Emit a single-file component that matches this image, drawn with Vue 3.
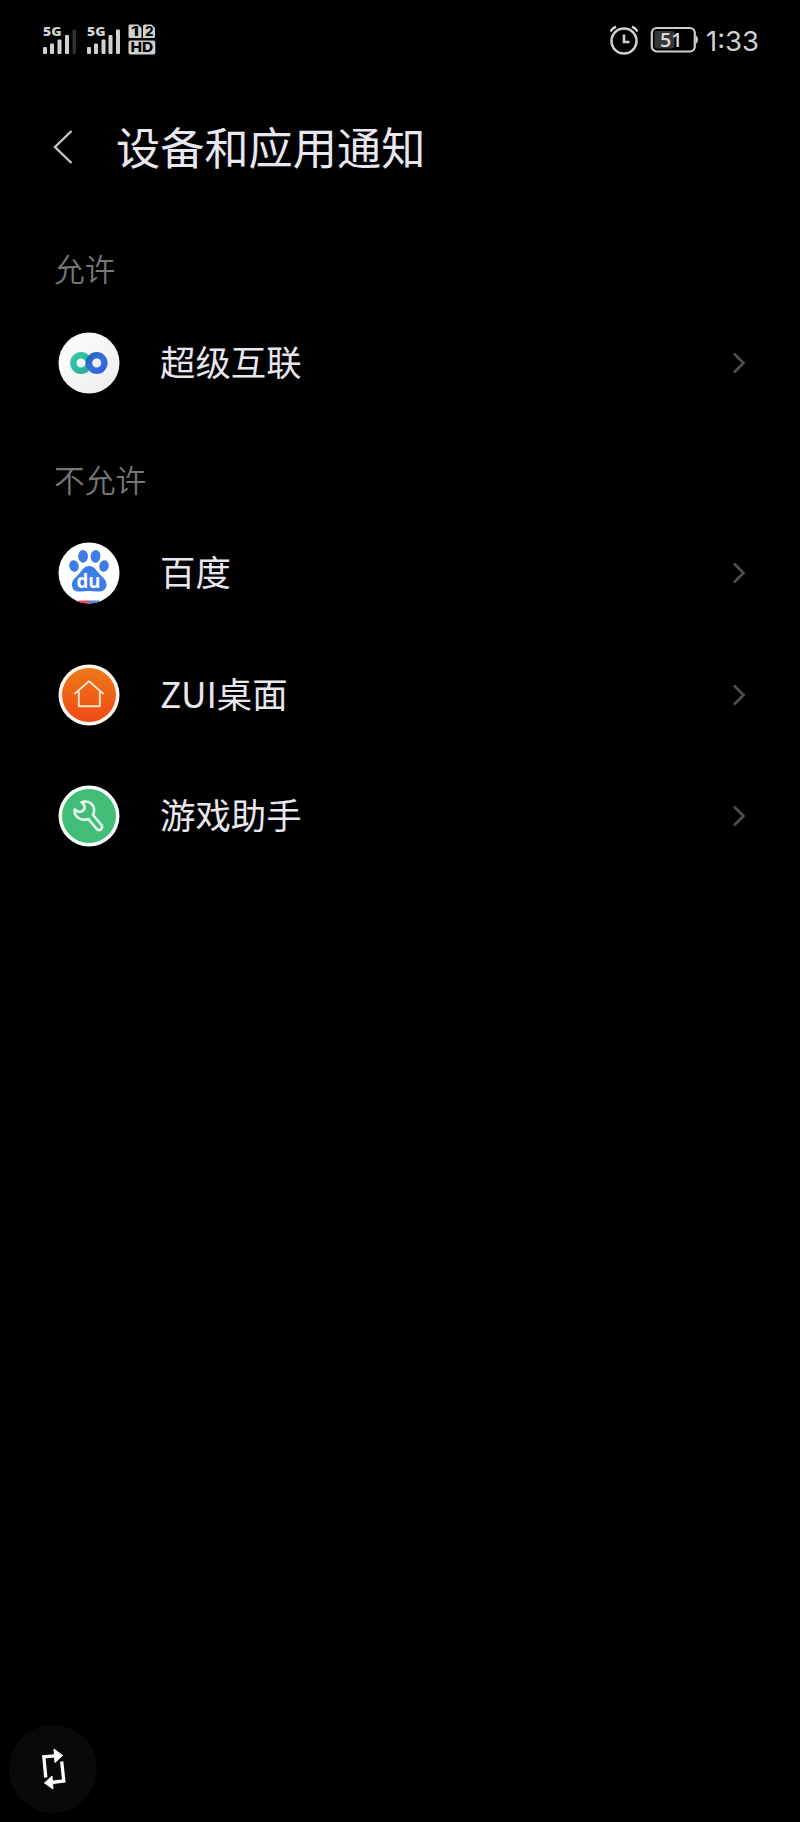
<script setup>
const sections = [
  { title: '允许', items: [{ name: '超级互联', icon: 'link' }] },
  {
    title: '不允许',
    items: [
      { name: '百度', icon: 'baidu' },
      { name: 'ZUI桌面', icon: 'home' },
      { name: '游戏助手', icon: 'tool' },
    ],
  },
]
</script>

<template>
  <div class="screen">
    <header class="status">
      <svg class="signals" width="120" height="40" viewBox="0 0 120 40">
        <g fill="#d0d0d0">
          <text x="3" y="16" class="net" textLength="18.5" lengthAdjust="spacingAndGlyphs">5G</text>
          <rect x="3" y="27" width="4" height="7" rx="1" />
          <rect x="10" y="23.5" width="4" height="10.5" rx="1" />
          <rect x="17.5" y="19.5" width="4" height="14.5" rx="1" />
          <rect x="25" y="15" width="4" height="19" rx="1" />
          <rect x="32.5" y="9.5" width="3.5" height="24.5" rx="1" fill="#303030" />
          <text x="47" y="16" class="net" textLength="18.5" lengthAdjust="spacingAndGlyphs">5G</text>
          <rect x="47" y="27" width="4" height="7" rx="1" />
          <rect x="54" y="23.5" width="4" height="10.5" rx="1" />
          <rect x="61.5" y="19.5" width="4" height="14.5" rx="1" />
          <rect x="68.5" y="15" width="4" height="19" rx="1" />
          <rect x="76" y="9.5" width="4" height="24.5" rx="1" />
          <path d="M90 4.500H98L101.500 8V18H90Q88.500 18 88.500 16.500V6Q88.500 4.500 90 4.500Z" />
          <path d="M104.500 4.500H111.500L115 8V16.500Q115 18 113.500 18H103V6Q103 4.500 104.500 4.500Z" />
          <rect x="88.500" y="20.500" width="26.800" height="14" rx="2" />
        </g>
        <g class="sim">
          <text x="91" y="16" textLength="8" lengthAdjust="spacingAndGlyphs">1</text>
          <text x="105" y="16" textLength="8.500" lengthAdjust="spacingAndGlyphs">2</text>
          <text x="90.500" y="32.200" textLength="22.800" lengthAdjust="spacingAndGlyphs">HD</text>
        </g>
      </svg>
      <div class="right">
        <svg class="alarm" width="32" height="32" viewBox="0 0 32 32" fill="none" stroke="#d0d0d0" stroke-width="2.500">
          <circle cx="16" cy="17" r="12.500" />
          <path d="M16 10.500V18H21.500" stroke-width="2.600" />
          <path d="M2.500 7.500Q4.500 4 8 2.800M24 2.800Q27.500 4 29.500 7.500" stroke-width="2.500" />
        </svg>
        <svg class="battery" width="50" height="28" viewBox="0 0 50 28">
          <rect x="1.800" y="2" width="43" height="23.500" rx="5" fill="none" stroke="#d0d0d0" stroke-width="2.200" />
          <rect x="4.500" y="5" width="20" height="17.500" rx="2.500" fill="#383838" />
          <path d="M46 9.500Q48 10.500 48 13.500T46 18Z" fill="#d0d0d0" />
          <text x="10" y="21" class="level" textLength="22.500" lengthAdjust="spacingAndGlyphs">51</text>
        </svg>
        <span class="time">1:33</span>
      </div>
    </header>

    <div class="title-bar">
      <svg class="back" width="24" height="40" viewBox="0 0 24 40" fill="none" stroke="#c9c9c9" stroke-width="2.300">
        <path d="M20.500 3L4 19L20.500 35" />
      </svg>
      <h1>设备和应用通知</h1>
    </div>

    <section v-for="s in sections" :key="s.title">
      <h2>{{ s.title }}</h2>
      <div v-for="item in s.items" :key="item.name" class="row">
        <svg class="icon" width="62" height="62" viewBox="0 0 62 62">
          <template v-if="item.icon === 'link'">
            <defs>
              <linearGradient id="plate" x1="0" y1="0" x2="1" y2="1">
                <stop offset="0" stop-color="#fff" />
                <stop offset="1" stop-color="#ececee" />
              </linearGradient>
              <linearGradient id="teal" x1="0" y1="0" x2="1" y2="1">
                <stop offset="0" stop-color="#36c9a6" />
                <stop offset="1" stop-color="#26ac9c" />
              </linearGradient>
              <linearGradient id="blue" x1="0" y1="0" x2="1" y2="1">
                <stop offset="0" stop-color="#1f66bc" />
                <stop offset=".5" stop-color="#3870dc" />
                <stop offset="1" stop-color="#315fd8" />
              </linearGradient>
            </defs>
            <circle cx="31" cy="31" r="30.500" fill="url(#plate)" />
            <circle cx="23" cy="31" r="7.700" fill="none" stroke="url(#teal)" stroke-width="6.400" />
            <circle cx="38.700" cy="31" r="7.700" fill="none" stroke="url(#blue)" stroke-width="6.400" />
          </template>
          <template v-else-if="item.icon === 'baidu'">
            <defs>
              <clipPath id="disc"><circle cx="31" cy="31" r="30.500" /></clipPath>
            </defs>
            <circle cx="31" cy="31" r="30.500" fill="#fff" />
            <g clip-path="url(#disc)">
              <rect x="20" y="58.500" width="11" height="4" fill="#ed4959" />
              <rect x="31" y="58.500" width="11" height="4" fill="#4b83ef" />
            </g>
            <g fill="#3e7ce8">
              <ellipse cx="25" cy="14.300" rx="4.900" ry="6.400" />
              <ellipse cx="37.500" cy="14.300" rx="4.900" ry="6.400" transform="rotate(6 37.500 14.300)" />
              <ellipse cx="16" cy="24" rx="4.700" ry="5.900" transform="rotate(-12 16 24)" />
              <ellipse cx="46" cy="24" rx="4.700" ry="5.900" transform="rotate(12 46 24)" />
              <path d="M31 24C36.500 24 37.500 28 42 32.500C46 36.500 49 39 48.500 43.500C48 48.500 43.500 50 39 49.500C33.500 48.700 28.500 48.700 23 49.500C18 50 14.500 48.500 14 43.500C13.500 39 16.500 36.500 20.500 32.500C25 28 25.500 24 31 24Z" />
            </g>
            <text x="18.500" y="46" class="du" textLength="24" lengthAdjust="spacingAndGlyphs">du</text>
          </template>
          <template v-else-if="item.icon === 'home'">
            <defs>
              <linearGradient id="orange" x1="0" y1="0" x2="0" y2="1">
                <stop offset="0" stop-color="#ed7918" />
                <stop offset="1" stop-color="#f04a15" />
              </linearGradient>
            </defs>
            <circle cx="31" cy="31" r="30.500" fill="#fff7f0" />
            <circle cx="31" cy="31" r="27" fill="url(#orange)" />
            <path d="M17 29.500L31 17.300L45 29.500M20.800 27.500V42.200H41.800V27.500" fill="none" stroke="#fce3c8" stroke-width="1.900" stroke-linejoin="round" stroke-linecap="round" />
          </template>
          <template v-else>
            <circle cx="31" cy="31" r="30.500" fill="#f7fffa" />
            <circle cx="31" cy="31" r="27" fill="#42bd77" />
            <path d="M23.500 17.200C28 15.500 33 17 35.200 21C36.600 24 36.200 27.500 35 30L43.500 40Q45 42.300 43 44.200Q40.800 46 38.700 44L30.500 34C27 35.300 22.500 35 19.500 32.300C17 30 16 27 16.800 24.500C19 26.500 22 27.500 24.500 26C27.500 24 27.500 20 23.500 17.200Z" fill="none" stroke="#eafff1" stroke-width="2.600" stroke-linejoin="round" />
          </template>
        </svg>
        <span class="name">{{ item.name }}</span>
        <svg class="chevron" width="14" height="24" viewBox="0 0 14 24" fill="none" stroke="#505050" stroke-width="2.600">
          <path d="M2 2.500L11.500 12L2 21.500" />
        </svg>
      </div>
    </section>

    <div class="rotate">
      <svg width="32" height="44" viewBox="0 0 32 44">
        <g fill="none" stroke="#fff" stroke-width="3.300">
          <path d="M8.800 30.500L6.800 9.800L18 8.800" />
          <path d="M24.700 14.500L26.800 34L14 35.500" />
        </g>
        <path d="M17 2L25.500 8.500L18 15.500Z" fill="#fff" stroke="#fff" stroke-linejoin="round" />
        <path d="M15 29L7.500 36L16 42Z" fill="#fff" stroke="#fff" stroke-linejoin="round" />
      </svg>
    </div>
  </div>
</template>

<style>
body {
  background: #000;
}
</style>

<style scoped>
.screen {
  box-sizing: border-box;
  position: relative;
  width: 800px;
  height: 1822px;
  overflow: hidden;
  background: #000;
  color: #e8e6ee;
  font-family: "Noto Sans CJK SC", sans-serif;
}
.status {
  display: flex;
  justify-content: space-between;
  align-items: center;
  height: 80px;
  padding: 0 40px;
}
.net {
  font: 800 13px "Open Sans", sans-serif;
}
.sim {
  font: 800 13.500px Inter, sans-serif;
  fill: #000;
}
.right {
  display: flex;
  align-items: center;
}
.alarm {
  margin-right: 10px;
}
.battery {
  margin-right: 6px;
}
.level {
  font: 600 20px "Open Sans", sans-serif;
  fill: #d8d8d8;
}
.du {
  font: 700 20px "Open Sans", sans-serif;
  fill: #fff;
}
.time {
  font: 400 27.500px/32px Inter, sans-serif;
  width: 54px;
  padding-top: 2px;
  white-space: nowrap;
  color: #d0d0d0;
}
.title-bar {
  display: flex;
  align-items: center;
  height: 136px;
  padding-left: 51px;
}
.back {
  margin-right: 41px;
}
h1 {
  margin: 0;
  padding-bottom: 4px;
  font-size: 44.200px;
  line-height: 60px;
  font-weight: 400;
}
section {
  height: 210.500px;
}
h2 {
  height: 86px;
  padding: 32px 0 0 54px;
  box-sizing: border-box;
  margin: 0;
  font-size: 30.700px;
  line-height: 40px;
  font-weight: 350;
  color: #77777a;
}
.row {
  display: flex;
  align-items: center;
  height: 121.500px;
  padding: 0 54px 0 57.500px;
}
.name {
  flex: 1;
  margin-left: 40.500px;
  padding-bottom: 4px;
  font-size: 35.400px;
  line-height: 50px;
}
.rotate {
  position: absolute;
  left: 9px;
  bottom: 9px;
  display: flex;
  align-items: center;
  justify-content: center;
  width: 88px;
  height: 88px;
  border-radius: 50%;
  background: #090909;
}
</style>
